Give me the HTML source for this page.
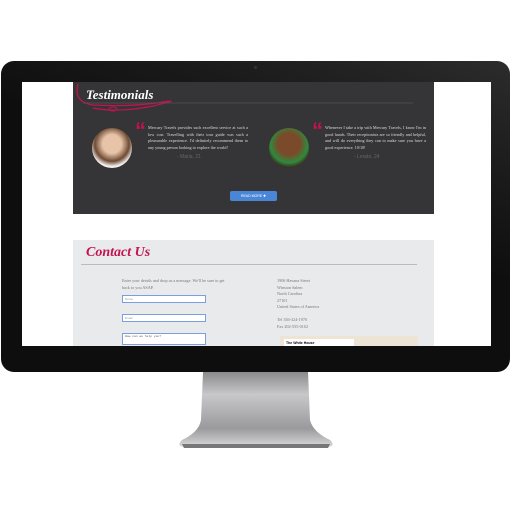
<!DOCTYPE html>
<html><head><style>
*{margin:0;padding:0;box-sizing:border-box}
body{width:512px;height:512px;background:#fff;position:relative;overflow:hidden;font-family:"Liberation Serif",serif}
.bezel{position:absolute;left:1px;top:61px;width:509px;height:311px;background:linear-gradient(200deg,#2c2c2c 0%,#1a1a1a 25%,#0e0e0e 45%);border-radius:13px;overflow:hidden}
.screen{position:absolute;left:22px;top:82px;width:469px;height:264px;background:#fff;overflow:hidden}
.dark{position:absolute;left:51px;top:0;width:361px;height:132px;background:#353537}
.cont{position:absolute;left:51px;top:158px;width:361px;height:110px;background:#e9eaec}
.t{position:absolute;font-size:4.2px;line-height:6.5px;color:#ddd;text-align:justify}
.stand{position:absolute;left:0;top:0}
</style></head><body>
<svg class="stand" width="512" height="512">
<defs><linearGradient id="g" x1="0" y1="0" x2="0" y2="1"><stop offset="0" stop-color="#8a8a8c"/><stop offset=".3" stop-color="#c8c8ca"/><stop offset=".75" stop-color="#9a9a9d"/><stop offset="1" stop-color="#d8d8da"/></linearGradient></defs>
<path d="M203 372 L308 372 L310 420 Q313 432 330 440 Q336 446 328 447 L184 447 Q176 446 182 440 Q199 432 201 420 Z" fill="url(#g)"/>
<path d="M182 444 L330 444 L328 448 L184 448 Z" fill="#777"/>
</svg>
<div class="bezel"></div>
<div style="position:absolute;left:254px;top:66px;width:3px;height:3px;border-radius:50%;background:#333"></div>
<div class="screen">
 <div class="dark">
  <svg width="361" height="40" style="position:absolute;left:0;top:0"><path d="M5 2 Q0 20 20 23 Q60 25 90 20 Q110 17 80 24 Q45 31 20 26" stroke="#c4134e" stroke-width="1.2" fill="none"/><ellipse cx="40" cy="27" rx="4" ry="2" stroke="#c4134e" fill="none"/><line x1="10" y1="21" x2="340" y2="21" stroke="#555" stroke-width=".7"/></svg>
  <div style="position:absolute;left:13px;top:5px;color:#fff;font:italic bold 13px 'Liberation Serif',serif">Testimonials</div>
  <div style="position:absolute;left:19px;top:46px;width:40px;height:40px;border-radius:50%;background:radial-gradient(circle at 50% 40%,#e7c3a8 30%,#6e4a33 55%,#f4f2f0 72%)"></div>
  <div style="position:absolute;left:196px;top:46px;width:40px;height:40px;border-radius:50%;background:radial-gradient(circle at 50% 40%,#7a4a2a 35%,#2f8a3d 60%,#3a3020 75%)"></div>
  <div style="position:absolute;left:62px;top:36px;color:#c4134e;font:bold 22px 'Liberation Sans';">&#8220;</div>
  <div style="position:absolute;left:239px;top:36px;color:#c4134e;font:bold 22px 'Liberation Sans';">&#8220;</div>
  <div class="t" style="left:75px;top:43px;width:100px">Mercury Travels provides such excellent service at such a low cost. Travelling with their tour guide was such a pleasurable experience. I'd definitely recommend them to any young person looking to explore the world!</div>
  <div class="t" style="left:252px;top:43px;width:101px">Whenever I take a trip with Mercury Travels, I know I'm in good hands. Their receptionists are so friendly and helpful, and will do everything they can to make sure you have a good experience. 10/10!</div>
  <div style="position:absolute;left:104px;top:72px;color:#666;font:5px 'Liberation Sans'">- Maria, 21</div>
  <div style="position:absolute;left:281px;top:72px;color:#666;font:5px 'Liberation Sans'">- Lerato, 24</div>
  <div style="position:absolute;left:157px;top:109px;width:47px;height:10px;background:#4a86d8;border-radius:2px;color:#fff;font:3.5px 'Liberation Sans';text-align:center;line-height:10px">READ MORE ✚</div>
 </div>
 <div class="cont">
  <div style="position:absolute;left:13px;top:5px;color:#c4134e;font:italic bold 14px 'Liberation Serif'">Contact Us</div>
  <div style="position:absolute;left:8px;top:24px;width:336px;height:1px;background:#bbb"></div>
  <div class="t" style="left:49px;top:38px;width:105px;color:#777;text-align:left">Enter your details and drop us a message. We'll be sure to get back to you ASAP.</div>
  <div style="position:absolute;left:49px;top:55px;width:84px;height:8px;border:1px solid #7a9ee0;background:#fff;font:3px 'Liberation Sans';color:#999;padding-left:2px;line-height:6px">Name</div>
  <div style="position:absolute;left:49px;top:74px;width:84px;height:8px;border:1px solid #7a9ee0;background:#fff;font:3px 'Liberation Sans';color:#999;padding-left:2px;line-height:6px">Email</div>
  <div style="position:absolute;left:49px;top:93px;width:84px;height:12px;border:1px solid #7a9ee0;background:#fff;font:3px 'Liberation Mono';color:#555;padding-left:2px;line-height:6px">How can we help you?</div>
  <div class="t" style="left:204px;top:38px;width:80px;color:#777;text-align:left">1906 Havana Street<br>Winston Salem<br>North Carolina<br>27101<br>United States of America<br><br>Tel 336-324-1970<br>Fax 202-555-0102</div>
  <div style="position:absolute;left:207px;top:96px;width:138px;height:14px;background:#eee4d6"><div style="position:absolute;left:4px;top:3px;width:70px;height:11px;background:#fff;font:bold 3.5px 'Liberation Sans';padding:2px">The White House</div></div>
 </div>
</div>
</body></html>
